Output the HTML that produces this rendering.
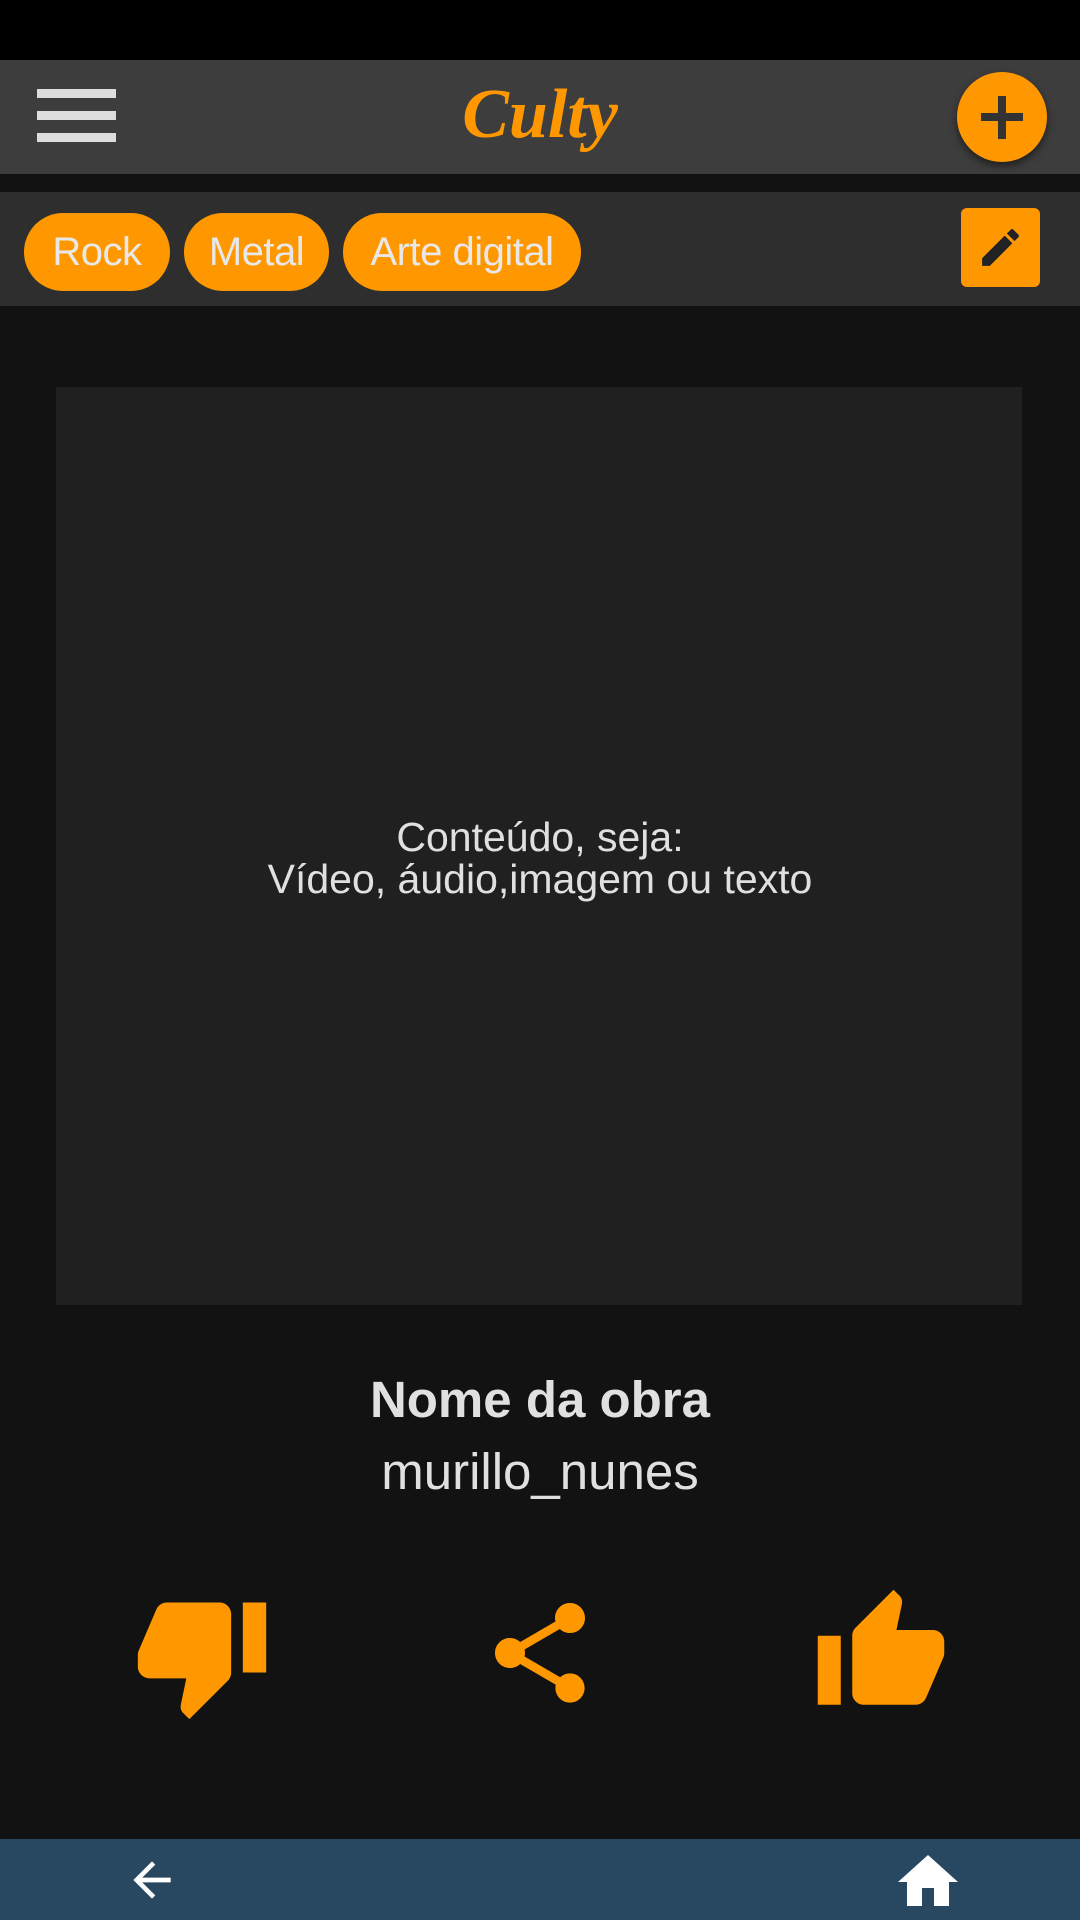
<!DOCTYPE html>
<html><head><meta charset="utf-8"><style>
*{margin:0;padding:0;box-sizing:border-box}
body{width:1080px;height:1920px;background:#121212;position:relative;overflow:hidden;font-family:"Liberation Sans",sans-serif}
.abs{position:absolute}
.chip{position:absolute;top:213px;height:78px;border-radius:39px;background:#ff9800;color:#e8e8e8;font-size:40px;line-height:78px;text-align:center;letter-spacing:-0.5px}
</style></head><body>
<div class="abs" style="left:0;top:0;width:1080px;height:60px;background:#000"></div>
<div class="abs" style="left:0;top:60px;width:1080px;height:114px;background:#3d3d3d"></div>
<div class="abs" style="left:37px;top:89px;width:79px;height:9px;background:#ddd"></div>
<div class="abs" style="left:37px;top:111px;width:79px;height:9px;background:#ddd"></div>
<div class="abs" style="left:37px;top:133px;width:79px;height:9px;background:#ddd"></div>
<div class="abs" style="left:440px;top:70px;width:200px;text-align:center;color:#ff9800;font-family:'Liberation Serif',serif;font-style:italic;font-weight:bold;font-size:70px;line-height:90px">Culty</div>
<div class="abs" style="left:957px;top:72px;width:90px;height:90px;border-radius:50%;background:#ff9800;box-shadow:0 4px 8px rgba(0,0,0,.5)"></div>
<div class="abs" style="left:998px;top:96px;width:8px;height:43px;background:#333"></div>
<div class="abs" style="left:981px;top:113px;width:42px;height:8px;background:#333"></div>
<div class="abs" style="left:0;top:192px;width:1080px;height:114px;background:#2e2e2e"></div>
<div class="chip" style="left:24px;width:146px">Rock</div>
<div class="chip" style="left:184px;width:145px">Metal</div>
<div class="chip" style="left:343px;width:238px">Arte digital</div>
<div class="abs" style="left:961px;top:208px;width:79px;height:79px;border-radius:6px;background:#ff9800"></div>
<svg class="abs" style="left:976px;top:223px" width="49" height="49" viewBox="0 0 24 24"><path fill="#222" d="M3 17.25V21h3.75L17.81 9.94l-3.75-3.75L3 17.25zM20.71 7.04a1 1 0 000-1.41l-2.34-2.34a1 1 0 00-1.41 0l-1.83 1.83 3.75 3.75 1.83-1.83z"/></svg>
<div class="abs" style="left:56px;top:387px;width:966px;height:918px;background:#202020"></div>
<div class="abs" style="left:0;top:816px;width:1080px;text-align:center;color:#e0e0e0;font-size:41px;line-height:42px">Conteúdo, seja:<br>Vídeo, áudio,imagem ou texto</div>
<div class="abs" style="left:0;top:1370px;width:1080px;text-align:center;color:#e0e0e0;font-size:51px;font-weight:bold;line-height:60px">Nome da obra</div>
<div class="abs" style="left:0;top:1442px;width:1080px;text-align:center;color:#e0e0e0;font-size:51px;line-height:60px">murillo_nunes</div>
<svg class="abs" style="left:132px;top:1585px" width="140" height="140" viewBox="0 0 24 24"><path fill="#ff9800" d="M15 3H6c-.83 0-1.54.5-1.84 1.22l-3.02 7.05c-.09.23-.14.47-.14.73v2c0 1.1.9 2 2 2h6.31l-.95 4.57-.03.32c0 .41.17.79.44 1.06L9.83 23l6.59-6.59c.36-.36.58-.86.58-1.41V5c0-1.1-.9-2-2-2zm4 0v12h4V3h-4z"/></svg>
<svg class="abs" style="left:480px;top:1593px" width="120" height="120" viewBox="0 0 24 24"><path fill="#ff9800" d="M18 16.08c-.76 0-1.440.3-1.960.77L8.91 12.7c.05-.23.09-.46.09-.7s-.04-.47-.09-.7l7.05-4.110c.54.5 1.25.81 2.04.81 1.66 0 3-1.34 3-3s-1.34-3-3-3-3 1.34-3 3c0 .24.04.47.09.7L8.04 9.81C7.5 9.31 6.79 9 6 9c-1.66 0-3 1.34-3 3s1.34 3 3 3c.79 0 1.5-.31 2.04-.81l7.12 4.16c-.05.21-.08.43-.08.65 0 1.61 1.31 2.92 2.92 2.92s2.92-1.31 2.92-2.92-1.31-2.92-2.920-2.920z"/></svg>
<svg class="abs" style="left:812px;top:1584px" width="138" height="138" viewBox="0 0 24 24"><path fill="#ff9800" d="M1 21h4V9H1v12zm22-11c0-1.1-.9-2-2-2h-6.31l.95-4.57.03-.32c0-.41-.17-.79-.44-1.06L14.17 1 7.59 7.59C7.22 7.95 7 8.45 7 9v10c0 1.1.9 2 2 2h9c.83 0 1.54-.5 1.84-1.22l3.02-7.05c.09-.23.14-.47.14-.73v-2z"/></svg>
<div class="abs" style="left:0;top:1839px;width:1080px;height:81px;background:#284760"></div>
<svg class="abs" style="left:122px;top:1852px" width="60" height="56" viewBox="0 0 24 24"><path fill="#fff" d="M20 11H7.83l5.59-5.59L12 4l-8 8 8 8 1.41-1.41L7.83 13H20v-2z"/></svg>
<svg class="abs" style="left:892px;top:1846px" width="72" height="66" viewBox="0 0 24 22"><path fill="#fff" d="M10 20v-6h4v6h5v-8h3L12 3 2 12h3v8z"/></svg>
</body></html>
